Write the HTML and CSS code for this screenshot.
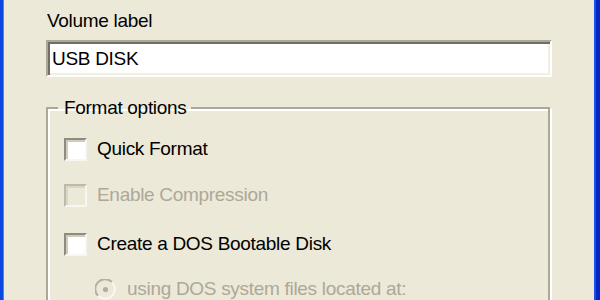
FILE: index.html
```html
<!DOCTYPE html>
<html lang="en">
<head>
<meta charset="utf-8">
<title>Format USB DISK</title>
<link rel="stylesheet" href="styles.css">
</head>
<body>
<div class="frame">
  <div class="dialog">
    <label class="field-label" for="vol">Volume label</label>
    <div class="textbox" id="vol">USB DISK</div>

    <fieldset class="group">
      <legend class="legend">Format options</legend>

      <div class="row row-quick">
        <span class="check"></span>
        <span class="text">Quick Format</span>
      </div>

      <div class="row row-compress disabled">
        <span class="check"></span>
        <span class="text">Enable Compression</span>
      </div>

      <div class="row row-boot">
        <span class="check"></span>
        <span class="text">Create a DOS Bootable Disk</span>
      </div>

      <div class="row row-radio disabled">
        <svg class="radio" width="21" height="21" viewBox="0 0 21 21">
          <circle cx="10.5" cy="10.5" r="9" fill="#ECE9D8"/>
          <path d="M3.1 16.9 A9 9 0 0 1 16.9 3.1" fill="none" stroke="#B3B0A3" stroke-width="2"/>
          <path d="M16.9 3.1 A9 9 0 0 1 3.1 16.9" fill="none" stroke="#F8F7F2" stroke-width="2"/>
          <circle cx="10.5" cy="10.5" r="2.6" fill="#B3B0A3"/>
        </svg>
        <span class="text">using DOS system files located at:</span>
      </div>
    </fieldset>
  </div>
</div>
</body>
</html>
```

FILE: styles.css
```css
html, body {
  margin: 0;
  padding: 0;
  width: 600px;
  height: 300px;
  overflow: hidden;
}

body {
  font-family: "Liberation Sans", Arial, sans-serif;
  font-size: 19px;
  letter-spacing: -0.3px;
  color: #000;
}

.frame {
  height: 300px;
  overflow: hidden;
  background: #ECE9D8;
  border-left: 3px solid #0A48E2;
  border-right: 4px solid #0226C4;
  display: flex;
}

.dialog {
  flex: 1;
  border-left: 1px solid #4A83F3;
  border-right: 2px solid #1B4FE6;
  padding: 10px 42px 0 42px;
  display: flex;
  flex-direction: column;
  align-items: stretch;
}

.field-label {
  display: block;
  line-height: 22px;
  height: 22px;
  padding-left: 1px;
}

.textbox {
  margin-top: 8px;
  height: 37px;
  box-sizing: border-box;
  background: #fff;
  border: 2px solid;
  border-color: #ACA899 #FFFFFF #FFFFFF #ACA899;
  box-shadow: inset 2px 2px 0 #716F64, inset -2px -2px 0 #F1EFE2;
  padding: 2px 4px 2px 4px;
  line-height: 29px;
  white-space: nowrap;
}

.group {
  margin: 20px 2px 0 0;
  padding: 18px 0 0 0;
  border: 2px solid #ACA899;
  box-shadow: inset 2px 2px 0 #FFFFFF, 2px 2px 0 #FFFFFF;
  min-height: 200px;
}

.legend {
  margin-left: 10px;
  padding: 0 4px 0 6px;
  line-height: 22px;
}

.row {
  display: flex;
  align-items: center;
  height: 24px;
  padding-left: 16px;
}

.row-compress { margin-top: 22px; }
.row-boot { margin-top: 25px; }
.row-radio { margin-top: 21px; padding-left: 47px; }

.check {
  flex: none;
  width: 23px;
  height: 23px;
  box-sizing: border-box;
  background: #fff;
  border: 2px solid;
  border-color: #8E8B7F #F7F6F1 #F7F6F1 #8E8B7F;
  box-shadow: inset 2px 2px 0 #CFCCBE;
}

.text {
  margin-left: 10px;
  line-height: 22px;
  white-space: nowrap;
}

.radio {
  flex: none;
  display: block;
}

.row-radio .text { margin-left: 11px; }

.disabled .text { color: #ACA899; }

.disabled .check {
  background: #ECE9D8;
  border-color: #BDBAAB #F7F6F1 #F7F6F1 #BDBAAB;
  box-shadow: inset 2px 2px 0 #DAD7C8;
}
```
